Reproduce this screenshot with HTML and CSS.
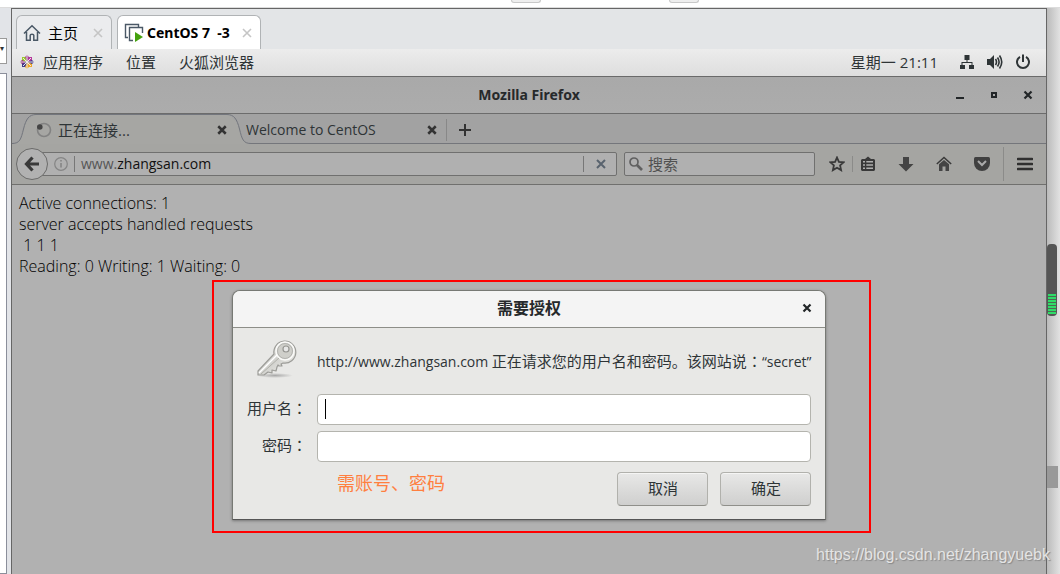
FILE: index.html
```html
<!DOCTYPE html>
<html lang="zh-CN">
<head>
<meta charset="utf-8">
<title>CentOS 7 -3</title>
<link rel="stylesheet" href="styles.css">
</head>
<body>
<div class="host-top"><span class="grip grip-one"></span><span class="grip grip-two"></span></div>
<div class="host">
  <aside class="host-left"><div class="side-box">▾</div><div class="side-panel"></div></aside>
  <main class="vm">
    <nav class="vm-tabs">
      <div class="vm-tab">
        <svg class="i18" viewBox="0 0 18 18" fill="none" stroke="#4a5866" stroke-width="1.5"><path d="M1 9.5 9 1.8l8 7.7M3.5 8v8.2h3.7v-5q0-1 1.8-1t1.8 1v5h3.7V8"/></svg>
        <span class="vm-label">主页</span>
        <button class="vm-close" aria-label="关闭主页"><svg class="i10" viewBox="0 0 10 10" stroke="#c5c5c5" stroke-width="1.6"><path d="m1 1 8 8M9 1 1 9"/></svg></button>
      </div>
      <div class="vm-tab vm-tab-on">
        <svg class="i20" viewBox="0 0 20 20" fill="none" stroke="#4a5866" stroke-width="1.4"><path d="M4 14.5H1.5v-13h13V4"/><path d="M9 17.5H5.500v-13h13V10"/><path d="m11 9 8 5-8 5z" fill="#45a10e" stroke="none"/></svg>
        <span class="vm-label vm-label-on">CentOS 7 &nbsp;-3</span>
        <button class="vm-close" aria-label="关闭 CentOS 7 -3"><svg class="i10" viewBox="0 0 10 10" stroke="#c5c5c5" stroke-width="1.6"><path d="m1 1 8 8M9 1 1 9"/></svg></button>
      </div>
    </nav>
    <div class="panel">
      <svg class="i14" viewBox="0 0 14 14"><path d="M7 0 9 2v4H5V2z" fill="#a5418f"/><path d="M7 14 5 12V8h4v4z" fill="#efa724"/><path d="m0 7 2-2h4v4H2z" fill="#932279"/><path d="m14 7-2 2H8V5h4z" fill="#3a3183"/><path d="M2 2h3l2 4-1 1-4-2z" fill="#9ccd2a"/><path d="M12 2v3L8 7 7 6l2-4z" fill="#b5379b"/><path d="M12 12H9L7 8l1-1 4 2z" fill="#f0a828"/><path d="M2 12V9l4-2 1 1-2 4z" fill="#413a8a"/><path d="m3 3 8 8M11 3l-8 8M7 0v14M0 7h14" stroke="#e9e9e9" stroke-width="1"/></svg>
      <span class="menu menu-apps">应用程序</span><span class="menu">位置</span><span class="menu">火狐浏览器</span>
      <div class="status">
        <span class="clock">星期一 21:11</span>
        <svg class="i16" viewBox="0 0 16 16" fill="#2e3436"><path d="M5.500 1h5v5h-2v2h5v3H15v4h-5v-4h2.500V9h-9v2H6v4H1v-4h1.500V8h5V6h-2z"/></svg>
        <svg class="i16" viewBox="0 0 16 16" fill="#2e3436"><path d="M0 5h3l4-4v14l-4-4H0z"/><path d="M8.500 5q2 3 0 6M10.500 3.500q3.200 4.500 0 9M12.500 1.500q4.500 6.500 0 13" fill="none" stroke="#2e3436" stroke-width="1.6"/></svg>
        <svg class="i16" viewBox="0 0 16 16" fill="none" stroke="#2e3436" stroke-width="2"><path d="M5 2.800a6 6 0 1 0 6 0M8 .5V8"/></svg>
      </div>
    </div>
    <header class="title">
      <span class="title-text">Mozilla Firefox</span>
      <div class="win-buttons">
        <button aria-label="最小化"><svg class="i10" viewBox="0 0 10 10"><path d="M1 7h8v2H1z" fill="#222628"/></svg></button>
        <button aria-label="最大化"><svg class="i10" viewBox="0 0 10 10"><path d="M3 3h4v4H3z" fill="none" stroke="#222628" stroke-width="2"/></svg></button>
        <button aria-label="关闭"><svg class="i10" viewBox="0 0 10 10"><path d="m1.500 1.500 7 7m0-7-7 7" stroke="#222628" stroke-width="2.200"/></svg></button>
      </div>
    </header>
    <div class="tabs">
      <div class="tab tab-on">
        <svg class="edge" viewBox="0 0 24 30"><path d="M0 30V29.500Q9 29.500 11.500 17T24 .5V30z" fill="#a6a6a3"/><path d="M0 29.500C8 29.500 9 25 11.500 15S17 .5 24 .5" fill="none" stroke="#73767d"/></svg>
        <div class="tab-body">
          <svg class="i16" viewBox="0 0 16 16"><circle cx="8" cy="8" r="6.500" fill="none" stroke="#828282" stroke-width="1.600"/><circle cx="3.800" cy="5" r="2.800" fill="#444"/></svg>
          <span class="tab-label">正在连接...</span>
          <button aria-label="关闭标签页"><svg class="i10" viewBox="0 0 8 8"><path d="m1 1 6 6m0-6L1 7" stroke="#333" stroke-width="2"/></svg></button>
        </div>
        <svg class="edge" viewBox="0 0 24 30"><path d="M24 30V29.500Q15 29.500 12.500 17T0 .5V30z" fill="#a6a6a3"/><path d="M24 29.500C16 29.500 15 25 12.500 15S7 .5 0 .5" fill="none" stroke="#73767d"/></svg>
      </div>
      <div class="tab tab-idle">
        <span class="tab-label">Welcome to CentOS</span>
        <button aria-label="关闭标签页"><svg class="i10" viewBox="0 0 8 8"><path d="m1 1 6 6m0-6L1 7" stroke="#333" stroke-width="2"/></svg></button>
      </div>
      <button class="new-tab" aria-label="新建标签页"><svg class="i12" viewBox="0 0 12 12"><path d="M6 0v12M0 6h12" stroke="#333" stroke-width="2"/></svg></button>
    </div>
    <div class="toolbar">
      <button class="back" aria-label="后退"><svg class="i16" viewBox="0 0 16 16" fill="none" stroke="#393939" stroke-width="3.200"><path d="M8.500 1.500 2.500 8l6 6.500M3 8h12"/></svg></button>
      <div class="url">
        <svg class="i14" viewBox="0 0 14 14" fill="none" stroke="#858585" stroke-width="1.200"><circle cx="7" cy="7" r="6.300"/><path d="M7 6v4.500M7 3v1.500" stroke-width="1.600"/></svg>
        <i class="url-rule"></i>
        <span class="address"><span class="dim">www.</span>zhangsan.com</span>
        <i class="url-rule"></i>
        <button class="stop" aria-label="停止"><svg class="i10" viewBox="0 0 10 10"><path d="m1 1 8 8m0-8L1 9" stroke="#59636e" stroke-width="2"/></svg></button>
      </div>
      <label class="search">
        <svg class="i14" viewBox="0 0 14 14" fill="none" stroke="#606060"><circle cx="5" cy="5" r="4" stroke-width="1.700"/><path d="m8 8 5 5" stroke-width="2.600"/></svg>
        <input class="search-input" type="text" placeholder="搜索" aria-label="搜索">
      </label>
      <div class="tools">
        <button aria-label="收藏"><svg class="i16" viewBox="0 0 16 16"><path d="m8 1.500 1.900 4.300 4.700.5-3.500 3.100 1 4.700L8 11.700l-4.100 2.400 1-4.700-3.500-3.100 4.700-.5z" fill="none" stroke="#393939" stroke-width="1.800"/></svg></button>
        <button aria-label="书签"><svg class="i16" viewBox="0 0 16 16"><path d="M2 3h3l3-2.500L11 3h3l1 1v10l-1 1H2l-1-1V4z" fill="#393939"/><path d="M3 5.800h2M6.300 5.800H13M3 9h2M6.300 9H13M3 12.200h2M6.300 12.200H13" stroke="#b0b0af" stroke-width="1.500"/></svg></button>
        <button aria-label="下载"><svg class="i16" viewBox="0 0 16 16"><path d="M5 1h6v7h4.500L8 15.500.5 8H5z" fill="#444"/></svg></button>
        <button aria-label="主页"><svg class="i16" viewBox="0 0 16 16"><path d="M.8 8 8 1.500 15.200 8" fill="none" stroke="#393939" stroke-width="1.500"/><path d="M3 8.200 8 4l5 4.200V15H9.500v-4.500h-3V15H3z" fill="#444"/></svg></button>
        <button aria-label="Pocket"><svg class="i16" viewBox="0 0 16 16"><path d="M1.500 1h13Q16 1 16 2.500V7A8 8 0 0 1 0 7V2.500Q0 1 1.500 1z" fill="#404040"/><path d="m4 5 4 4 4-4" fill="none" stroke="#aaa" stroke-width="2"/></svg></button>
        <button aria-label="菜单"><svg class="i16" viewBox="0 0 16 16"><path d="M1 3h14M1 8h14M1 13h14" stroke="#303030" stroke-width="2.600" stroke-linecap="round"/></svg></button>
      </div>
    </div>
    <section class="page">
      <pre class="output">Active connections: 1
server accepts handled requests
 1 1 1
Reading: 0 Writing: 1 Waiting: 0</pre>
      <div class="highlight">
        <form class="dialog" role="dialog" aria-labelledby="dlg-title">
          <div class="dialog-head"><span id="dlg-title">需要授权</span><button class="dialog-close" type="button" aria-label="关闭"><svg class="i10" viewBox="0 0 10 10"><path d="m1.500 1.500 7 7m0-7-7 7" stroke="#222628" stroke-width="2.200"/></svg></button></div>
          <div class="dialog-body">
            <svg class="key" viewBox="0 0 44 44"><defs><linearGradient id="metal" x2="1" y2="1"><stop stop-color="#f6f6f3"/><stop offset=".5" stop-color="#d2d2ce"/><stop offset="1" stop-color="#f0f0ed"/></linearGradient><radialGradient id="shade"><stop stop-color="#999" stop-opacity=".8"/><stop offset="1" stop-color="#999" stop-opacity="0"/></radialGradient></defs><ellipse cx="20" cy="38.500" rx="18" ry="2.500" fill="url(#shade)"/><path d="M19 17a11 11 0 1 1 9 9l-2 1 1 2-3 0-1-1-1 2-1 4-4-1 0 3-4-1-4 3H3v-4z" fill="url(#metal)" stroke="#9c9c98" stroke-width="1.200" stroke-linejoin="round"/><circle cx="30" cy="14" r="9" fill="none" stroke="#fafaf8" stroke-width="1.500"/><circle cx="30" cy="14" r="7.500" fill="#cfcfca" stroke="#aaaaa6" stroke-width=".8"/><circle cx="31" cy="12" r="3" fill="#e8e8e7" stroke="#969692" stroke-width="1.200"/><path d="M4 36 22 18" stroke="#fff" stroke-width="1.500"/><path d="m6 37 18-16" stroke="#b0b0aa"/></svg>
            <p class="message">http://www.zhangsan.com <span class="cjk">正在请求您的用户名和密码。该网站说<span class="colon" lang="zh-TW">：</span></span>“secret”</p>
            <label class="field-label" for="user">用户名<span class="colon" lang="zh-TW">：</span></label>
            <div class="field"><i class="caret"></i><input id="user" type="text"></div>
            <label class="field-label" for="pass">密码<span class="colon" lang="zh-TW">：</span></label>
            <div class="field"><input id="pass" type="password"></div>
            <span class="note">需账号、密码</span>
            <div class="actions"><button type="button">取消</button><button type="submit">确定</button></div>
          </div>
        </form>
      </div>
    </section>
  </main>
  <aside class="host-right"><div class="meter"><div class="meter-level"></div></div><div class="thumb"></div></aside>
</div>
<div class="watermark">https://blog.csdn.net/zhangyuebk</div>
</body>
</html>
```
FILE: styles.css
```css
* { box-sizing: border-box; }
body {
  margin: 0;
  min-height: 100vh;
  display: flex;
  flex-direction: column;
  position: relative;
  overflow: hidden;
  background: #fff;
  color: #2e3436;
  font: 14px/20px "Open Sans", "Noto Sans CJK SC", sans-serif;
}
button {
  padding: 0;
  border: 0;
  background: none;
  color: inherit;
  font: inherit;
  display: flex;
  align-items: center;
  justify-content: center;
}
svg { display: block; flex: none; }
.i10 { width: 10px; height: 10px; }
.i12 { width: 12px; height: 12px; }
.i14 { width: 14px; height: 14px; }
.i16 { width: 16px; height: 16px; }
.i18 { width: 18px; height: 18px; }
.i20 { width: 20px; height: 20px; }

/* host window around the virtual machine */
.host-top { height: 8px; border-bottom: 1px solid #dcdcdc; display: flex; padding-left: 511px; gap: 128px; }
.grip { width: 30px; height: 3px; background: #eee; border: 1px solid #c8c8c8; border-top: 0; border-radius: 0 0 3px 3px; }
.host { flex: 1; display: flex; }
.host-left { width: 11px; background: #e2e4e8; padding-top: 30px; display: flex; flex-direction: column; gap: 9px; }
.side-box { width: 7px; height: 26px; background: #fff; border: 1px solid #9a9a9a; border-left: 0; overflow: hidden; font-size: 8px; line-height: 18px; }
.side-panel { width: 7px; flex: 1; background: #fff; border: 1px solid #8b8f9b; border-left: 0; }
.vm { flex: 1; min-width: 0; display: flex; flex-direction: column; border: solid #666; border-width: 1px 1px 0; }
.host-right { width: 13px; background: linear-gradient(90deg, #bbb, #e2e2e2); padding-top: 236px; }
.meter { width: 10px; height: 72px; background: #555; border-radius: 4px; padding: 50px 1px 2px; }
.meter-level { height: 20px; background: repeating-linear-gradient(#2fdc68 0 2px, #4b6a53 2px 3px); }
.thumb { height: 22px; width: 11px; background: #999; margin-top: 150px; }

.vm-tabs { height: 40px; background: #e3e5e7; display: flex; align-items: flex-end; gap: 5px; padding-left: 4px; }
.vm-tab { height: 34px; display: flex; align-items: center; padding: 0 8px 0 6px; background: #ebecee; border: 1px solid #b0b3b5; border-bottom: 0; border-radius: 6px 6px 0 0; color: #000; }
.vm-tab-on { background: #fff; }
.vm-label { font: 15px/20px "Noto Sans CJK SC", sans-serif; margin: 0 15px 0 7px; }
.vm-label-on { font: bold 14px/20px "Noto Sans", sans-serif; margin: 0 12px 0 3px; }

/* desktop panel */
.panel { height: 28px; display: flex; align-items: center; padding: 0 15px 2px 8px; background: linear-gradient(#ececec, #dedede); border-bottom: 1px solid #6a6a6a; font-size: 15px; }
.menu { margin-right: 23px; }
.menu-apps { margin-left: 9px; }
.status { margin-left: auto; display: flex; align-items: center; gap: 12px; }
.clock { margin-right: 9px; }

/* browser chrome */
.title { height: 37px; display: grid; place-items: center; background: linear-gradient(#a9a9a9, #acacac); border-bottom: 1px solid #6c6c6c; font: bold 14px/20px "Noto Sans", sans-serif; color: #26292b; }
.title > * { grid-area: 1 / 1; }
.win-buttons { justify-self: end; display: flex; gap: 24px; padding-right: 13px; }

.tabs { height: 30px; display: flex; background: #a2a2a2; box-shadow: inset 0 -1px #74767b; }
.tab { display: flex; align-items: center; }
.tab-on { width: 239px; flex: none; }
.edge { width: 24px; height: 30px; }
.tab-body { flex: 1; height: 30px; display: flex; align-items: center; background: #a6a6a3; border-top: 1px solid #73767d; gap: 6px; }
.tab-body .tab-label { font-size: 15px; }
.tab-body button { margin-left: auto; }
.tab-idle { width: 201px; margin: 2px 0 0 -5px; justify-content: space-between; padding-right: 9px; align-self: center; height: 22px; border-right: 1px solid #888; }
.new-tab { width: 36px; height: 32px; }

.toolbar { height: 41px; background: #a5a5a2; border-bottom: 1px solid #70706e; display: flex; align-items: center; padding: 0 13px 0 4px; }
.back { width: 32px; height: 32px; flex: none; border: 1px solid #6b6b6a; border-radius: 50%; background: #b1b1b1; z-index: 1; }
.url { flex: 1; height: 24px; margin-left: -6px; display: flex; align-items: center; gap: 6px; padding-left: 11px; background: #b0b0b0; border: 1px solid #70706f; border-radius: 0 2px 2px 0; }
.url-rule { width: 1px; height: 16px; background: #777; }
.address { flex: 1; color: #111; }
.dim { color: #555; }
.stop { width: 22px; margin-right: 4px; }
.search { width: 191px; height: 24px; margin-left: 7px; display: flex; align-items: center; gap: 5px; padding-left: 4px; background: #b0b0b0; border: 1px solid #70706f; border-radius: 2px; }
.search-input { min-width: 0; flex: 1; padding: 0; border: 0; background: none; font: inherit; font-size: 15px; outline: 0; }
.search-input::placeholder { color: #505050; opacity: 1; }
.tools { display: flex; align-items: center; gap: 22px; margin-left: 14px; }
.tools button:first-child { margin-right: -14px; }
.tools button:nth-child(2) { border-left: 1px solid #8b8b89; padding-left: 7px; margin-left: -1px; }
.tools button:last-child { border-left: 1px solid #8b8b89; padding-left: 13px; height: 34px; margin-left: -9px; }

/* page and the dialog over it */
.page { flex: 1; background: #b1b1b1; position: relative; padding: 8px 7px; }
.output { margin: 0; color: #000; font: 300 16px/21px "Open Sans", sans-serif; }
.highlight { position: absolute; top: 95px; left: 200px; right: 175px; border: 2px solid #f00; padding: 8px 43px 11px 18px; }
.dialog { margin: 0; background: #e8e8e6; border: 1px solid #777974; border-bottom-color: #555; border-radius: 8px 8px 0 0; box-shadow: 0 1px 3px #0005; }
.dialog-head { height: 37px; display: grid; place-items: center; padding-bottom: 2px; background: #f4f4f4; border-bottom: 1px solid #8d8e88; border-radius: 7px 7px 0 0; font-size: 16px; font-weight: bold; color: #26292b; }
.dialog-head > * { grid-area: 1 / 1; }
.dialog-close { justify-self: end; margin-right: 13px; }
.dialog-body { display: grid; grid-template-columns: 77px 1fr; column-gap: 7px; row-gap: 6px; align-items: center; padding: 9px 16px 13px 0; }
.key { width: 44px; height: 44px; justify-self: end; margin: 0 11px 7px 0; }
.message { margin: 0 0 2px; white-space: nowrap; }
.cjk { font-size: 15px; }
.colon { font-family: "Noto Sans CJK TC", sans-serif; }
.field-label { justify-self: end; white-space: nowrap; font-size: 15px; margin: 0 3px 3px 0; }
.field { height: 31px; display: flex; position: relative; }
.field input { width: 100%; border: 1px solid #b4b4ae; border-radius: 4px; background: #fff; padding: 0 7px; font: inherit; outline: 0; }
.caret { position: absolute; left: 8px; top: 5px; width: 1px; height: 20px; background: #000; }
.note { grid-column: 2; grid-row: 4; align-self: start; margin: 3px 0 0 20px; font-size: 18px; line-height: 24px; color: #ff7f3f; }
.actions { grid-column: 2; grid-row: 4; justify-self: end; display: flex; gap: 12px; margin-top: 4px; }
.actions button { width: 91px; height: 34px; padding-bottom: 2px; border: 1px solid #b1b1ac; border-bottom-color: #8f8f8a; border-radius: 4px; background: linear-gradient(#e8e8e7, #cfcfce); box-shadow: inset 0 1px #f5f5f4; font-size: 15px; }
.watermark { position: absolute; right: 10px; bottom: 8px; font: 16px/22px "Liberation Sans", sans-serif; color: #e4e4e4; text-shadow: 1px 1px 1px #888; }
```
